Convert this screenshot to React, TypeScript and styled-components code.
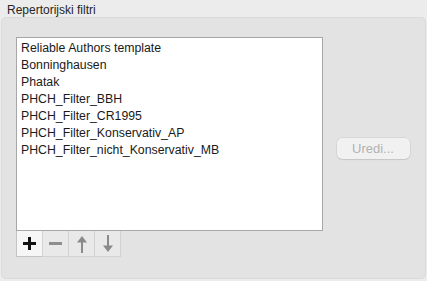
import styled, { createGlobalStyle } from 'styled-components';

const GlobalStyle = createGlobalStyle`
  html, body {
    margin: 0;
    padding: 0;
    background: #ececec;
  }
  body {
    font-family: 'Helvetica Neue', 'Liberation Sans', Arial, sans-serif;
    -webkit-font-smoothing: antialiased;
  }
`;

const StyledWindow = styled.div`
  width: 427px;
  height: 281px;
  box-sizing: border-box;
  padding: 3px 1px 2px 1px;
  display: flex;
  flex-direction: column;
`;

const GroupTitle = styled.div`
  font-size: 12px;
  line-height: 14px;
  color: #262626;
  padding-left: 6px;
`;

const GroupBox = styled.div`
  flex: 1;
  box-sizing: border-box;
  background: #e3e3e3;
  border: 1px solid #dadada;
  border-radius: 5px;
  display: flex;
  padding: 19px 0 0 14px;
`;

const ListColumn = styled.div`
  display: flex;
  flex-direction: column;
`;

const ListBox = styled.ul`
  width: 307px;
  height: 194px;
  box-sizing: border-box;
  margin: 0;
  padding: 2px 0 0 4px;
  list-style: none;
  background: #ffffff;
  border: 1px solid #a7a7a7;
`;

const ListItem = styled.li`
  font-size: 12.3px;
  line-height: 17px;
  color: #1a1a1a;
  white-space: nowrap;
`;

const ButtonBar = styled.div`
  display: flex;
`;

const SquareButton = styled.button<{ $active?: boolean }>`
  width: 27px;
  height: 26px;
  box-sizing: border-box;
  margin: 0 -1px 0 0;
  padding: 0;
  display: flex;
  align-items: center;
  justify-content: center;
  background: ${({ $active }) => ($active ? '#f6f6f6' : '#e9e9e9')};
  border: 1px solid ${({ $active }) => ($active ? '#c4c4c4' : '#d2d2d2')};
  border-top: none;
`;

const SideColumn = styled.div`
  flex: 1;
  display: flex;
  justify-content: center;
  align-items: flex-start;
  padding-top: 101px;
  padding-right: 2px;
`;

const EditButton = styled.button`
  width: 73px;
  height: 21px;
  box-sizing: border-box;
  padding: 0;
  font-family: inherit;
  font-size: 13px;
  color: #b2b2b2;
  background: #f1f1f1;
  border: none;
  border-radius: 5px;
  box-shadow: 0 0 0 0.5px rgba(0, 0, 0, 0.1), 0 1px 1px rgba(0, 0, 0, 0.08);
`;

const filters = [
  'Reliable Authors template',
  'Bonninghausen',
  'Phatak',
  'PHCH_Filter_BBH',
  'PHCH_Filter_CR1995',
  'PHCH_Filter_Konservativ_AP',
  'PHCH_Filter_nicht_Konservativ_MB',
];

function PlusIcon() {
  return (
    <svg width='15' height='15' viewBox='0 0 15 15'>
      <path d='M7.5 1v13M1 7.5h13' stroke='#111' strokeWidth='3' />
    </svg>
  );
}

function MinusIcon() {
  return (
    <svg width='15' height='15' viewBox='0 0 15 15'>
      <path d='M1 7.5h13' stroke='#8e8e8e' strokeWidth='3' />
    </svg>
  );
}

function ArrowIcon({ down }: { down?: boolean }) {
  return (
    <svg width='12' height='18' viewBox='0 0 12 18' style={down ? { transform: 'rotate(180deg)' } : undefined}>
      <path d='M6 5v13' stroke='#8a8a8a' strokeWidth='2' />
      <path d='M1 7.5L6 1l5 6.5z' fill='#8a8a8a' />
    </svg>
  );
}

function App() {
  return (
    <StyledWindow>
      <GlobalStyle />
      <GroupTitle>Repertorijski filtri</GroupTitle>
      <GroupBox>
        <ListColumn>
          <ListBox>
            {filters.map((name) => (
              <ListItem key={name}>{name}</ListItem>
            ))}
          </ListBox>
          <ButtonBar>
            <SquareButton $active>
              <PlusIcon />
            </SquareButton>
            <SquareButton>
              <MinusIcon />
            </SquareButton>
            <SquareButton>
              <ArrowIcon />
            </SquareButton>
            <SquareButton>
              <ArrowIcon down />
            </SquareButton>
          </ButtonBar>
        </ListColumn>
        <SideColumn>
          <EditButton>Uredi...</EditButton>
        </SideColumn>
      </GroupBox>
    </StyledWindow>
  );
}

export default App;
